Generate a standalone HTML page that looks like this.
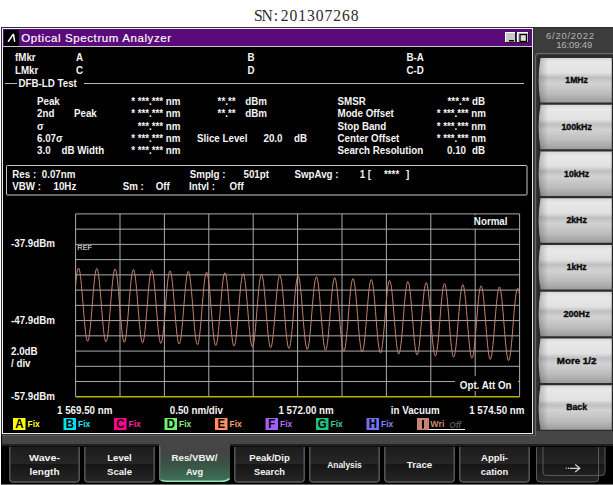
<!DOCTYPE html>
<html><head><meta charset="utf-8"><style>
html,body{margin:0;padding:0;width:613px;height:485px;overflow:hidden;background:#fff}
svg{display:block}
text{font-family:"Liberation Sans",sans-serif}
</style></head><body>
<svg width="613" height="485" viewBox="0 0 613 485">
<defs>
<linearGradient id="bf" x1="0" y1="0" x2="0" y2="1">
<stop offset="0" stop-color="#d8d8d8"/><stop offset="0.1" stop-color="#e8e8e8"/><stop offset="0.33" stop-color="#e2e2e2"/><stop offset="0.44" stop-color="#c0c0c0"/>
<stop offset="0.57" stop-color="#d2d2d2"/><stop offset="0.8" stop-color="#bcbcbc"/><stop offset="1" stop-color="#9c9c9c"/>
</linearGradient>
<linearGradient id="ls" x1="0" y1="0" x2="1" y2="0">
<stop offset="0" stop-color="#000" stop-opacity="0.22"/><stop offset="1" stop-color="#000" stop-opacity="0"/>
</linearGradient>
<linearGradient id="ub" x1="0" y1="0" x2="0" y2="1">
<stop offset="0" stop-color="#1c1c1c"/><stop offset="0.48" stop-color="#262626"/><stop offset="0.5" stop-color="#161616"/><stop offset="1" stop-color="#262626"/>
</linearGradient>
<linearGradient id="sel" x1="0" y1="0" x2="0" y2="1">
<stop offset="0" stop-color="#464646"/><stop offset="0.3" stop-color="#444444"/><stop offset="0.6" stop-color="#3a5446"/><stop offset="1" stop-color="#3e7458"/>
</linearGradient>
</defs>
<rect x="0" y="0" width="613" height="485" fill="#ffffff"/>
<text transform="translate(258.30 21) scale(0.93 1)" style="font-family:'Liberation Serif',serif" font-size="16.8" fill="#2a2a2a" text-anchor="middle">S</text>
<text transform="translate(267.05 21) scale(0.93 1)" style="font-family:'Liberation Serif',serif" font-size="16.8" fill="#2a2a2a" text-anchor="middle">N</text>
<text transform="translate(275.80 21) scale(0.93 1)" style="font-family:'Liberation Serif',serif" font-size="16.8" fill="#2a2a2a" text-anchor="middle">:</text>
<text transform="translate(284.55 21) scale(0.93 1)" style="font-family:'Liberation Serif',serif" font-size="16.8" fill="#2a2a2a" text-anchor="middle">2</text>
<text transform="translate(293.30 21) scale(0.93 1)" style="font-family:'Liberation Serif',serif" font-size="16.8" fill="#2a2a2a" text-anchor="middle">0</text>
<text transform="translate(302.05 21) scale(0.93 1)" style="font-family:'Liberation Serif',serif" font-size="16.8" fill="#2a2a2a" text-anchor="middle">1</text>
<text transform="translate(310.80 21) scale(0.93 1)" style="font-family:'Liberation Serif',serif" font-size="16.8" fill="#2a2a2a" text-anchor="middle">3</text>
<text transform="translate(319.55 21) scale(0.93 1)" style="font-family:'Liberation Serif',serif" font-size="16.8" fill="#2a2a2a" text-anchor="middle">0</text>
<text transform="translate(328.30 21) scale(0.93 1)" style="font-family:'Liberation Serif',serif" font-size="16.8" fill="#2a2a2a" text-anchor="middle">7</text>
<text transform="translate(337.05 21) scale(0.93 1)" style="font-family:'Liberation Serif',serif" font-size="16.8" fill="#2a2a2a" text-anchor="middle">2</text>
<text transform="translate(345.80 21) scale(0.93 1)" style="font-family:'Liberation Serif',serif" font-size="16.8" fill="#2a2a2a" text-anchor="middle">6</text>
<text transform="translate(354.55 21) scale(0.93 1)" style="font-family:'Liberation Serif',serif" font-size="16.8" fill="#2a2a2a" text-anchor="middle">8</text>
<rect x="1" y="27" width="612" height="458" fill="#3c3c3c"/>
<rect x="1" y="27" width="612" height="1" fill="#2e2e2e"/>
<rect x="1" y="27" width="533" height="408" fill="#303030"/>
<rect x="2" y="28" width="531" height="406" fill="#ececec"/>
<rect x="3" y="29" width="529" height="404" fill="#000"/>
<rect x="3" y="29" width="529" height="17" fill="#5a0a7a"/>
<rect x="3" y="46" width="529" height="1" fill="#c8c8c8"/>
<rect x="4" y="30" width="15" height="16" fill="#000"/>
<path d="M8.4 41.2 L13 34.6 M13.5 34.6 L14.6 41.2" stroke="#fff" stroke-width="1.5" fill="none" stroke-linecap="round"/>
<text x="21.2" y="41.8" font-size="11.5" font-weight="normal" fill="#fff" text-anchor="start" letter-spacing="0.6" stroke="#fff" stroke-width="0.15">Optical Spectrum Analyzer</text>
<rect x="505" y="32" width="11" height="11" fill="#1e1e1e"/>
<rect x="505" y="32" width="10" height="10" fill="#fff"/>
<rect x="506" y="33" width="9" height="9" fill="#c8c8c8"/>
<rect x="509" y="40" width="5" height="1.5" fill="#000"/>
<rect x="517" y="32" width="12" height="11" fill="#1e1e1e"/>
<rect x="517" y="32" width="11" height="10" fill="#fff"/>
<rect x="518" y="33" width="10" height="9" fill="#c8c8c8"/>
<rect x="520" y="34.5" width="6.5" height="7" fill="none" stroke="#000" stroke-width="1.2"/>
<rect x="521.5" y="36" width="3.5" height="4" fill="#e0e0e0"/>
<text transform="translate(15 61.3) scale(0.905 1)" font-size="10.8" font-weight="bold" fill="#f4f4f4" text-anchor="start" >fMkr</text>
<text transform="translate(15 73.5) scale(0.905 1)" font-size="10.8" font-weight="bold" fill="#f4f4f4" text-anchor="start" >LMkr</text>
<text transform="translate(76 61.3) scale(0.905 1)" font-size="10.8" font-weight="bold" fill="#f4f4f4" text-anchor="start" >A</text>
<text transform="translate(76 73.5) scale(0.905 1)" font-size="10.8" font-weight="bold" fill="#f4f4f4" text-anchor="start" >C</text>
<text transform="translate(247.5 61.3) scale(0.905 1)" font-size="10.8" font-weight="bold" fill="#f4f4f4" text-anchor="start" >B</text>
<text transform="translate(247.5 73.5) scale(0.905 1)" font-size="10.8" font-weight="bold" fill="#f4f4f4" text-anchor="start" >D</text>
<text transform="translate(406.5 61.3) scale(0.905 1)" font-size="10.8" font-weight="bold" fill="#f4f4f4" text-anchor="start" >B-A</text>
<text transform="translate(406.5 73.5) scale(0.905 1)" font-size="10.8" font-weight="bold" fill="#f4f4f4" text-anchor="start" >C-D</text>
<rect x="5" y="83" width="12" height="1" fill="#b8b8b8"/>
<rect x="84" y="83" width="440" height="1" fill="#b8b8b8"/>
<text transform="translate(18.5 86.5) scale(0.905 1)" font-size="10.8" font-weight="bold" fill="#f4f4f4" text-anchor="start" >DFB-LD Test</text>
<text transform="translate(37 105.2) scale(0.905 1)" font-size="10.8" font-weight="bold" fill="#f4f4f4" text-anchor="start" >Peak</text>
<text transform="translate(37 117.4) scale(0.905 1)" font-size="10.8" font-weight="bold" fill="#f4f4f4" text-anchor="start" >2nd</text>
<text transform="translate(74 117.4) scale(0.905 1)" font-size="10.8" font-weight="bold" fill="#f4f4f4" text-anchor="start" >Peak</text>
<text transform="translate(37 129.6) scale(0.905 1)" font-size="10.8" font-weight="bold" fill="#f4f4f4" text-anchor="start" >σ</text>
<text transform="translate(37 141.8) scale(0.905 1)" font-size="10.8" font-weight="bold" fill="#f4f4f4" text-anchor="start" >6.07σ</text>
<text transform="translate(37 154.0) scale(0.905 1)" font-size="10.8" font-weight="bold" fill="#f4f4f4" text-anchor="start" >3.0</text>
<text transform="translate(61.5 154.0) scale(0.905 1)" font-size="10.8" font-weight="bold" fill="#f4f4f4" text-anchor="start" >dB Width</text>
<text transform="translate(180.5 105.2) scale(0.905 1)" font-size="10.8" font-weight="bold" fill="#f4f4f4" text-anchor="end" >* ***.*** nm</text>
<text transform="translate(180.5 117.4) scale(0.905 1)" font-size="10.8" font-weight="bold" fill="#f4f4f4" text-anchor="end" >* ***.*** nm</text>
<text transform="translate(180.5 141.8) scale(0.905 1)" font-size="10.8" font-weight="bold" fill="#f4f4f4" text-anchor="end" >* ***.*** nm</text>
<text transform="translate(180.5 154.0) scale(0.905 1)" font-size="10.8" font-weight="bold" fill="#f4f4f4" text-anchor="end" >* ***.*** nm</text>
<text transform="translate(180.5 129.6) scale(0.905 1)" font-size="10.8" font-weight="bold" fill="#f4f4f4" text-anchor="end" >***.*** nm</text>
<text transform="translate(235.5 105.2) scale(0.905 1)" font-size="10.8" font-weight="bold" fill="#f4f4f4" text-anchor="end" >**.**</text>
<text transform="translate(245.3 105.2) scale(0.905 1)" font-size="10.8" font-weight="bold" fill="#f4f4f4" text-anchor="start" >dBm</text>
<text transform="translate(235.5 117.4) scale(0.905 1)" font-size="10.8" font-weight="bold" fill="#f4f4f4" text-anchor="end" >**.**</text>
<text transform="translate(245.3 117.4) scale(0.905 1)" font-size="10.8" font-weight="bold" fill="#f4f4f4" text-anchor="start" >dBm</text>
<text transform="translate(197 141.8) scale(0.905 1)" font-size="10.8" font-weight="bold" fill="#f4f4f4" text-anchor="start" >Slice Level</text>
<text transform="translate(263.5 141.8) scale(0.905 1)" font-size="10.8" font-weight="bold" fill="#f4f4f4" text-anchor="start" >20.0</text>
<text transform="translate(294 141.8) scale(0.905 1)" font-size="10.8" font-weight="bold" fill="#f4f4f4" text-anchor="start" >dB</text>
<text transform="translate(337.5 105.2) scale(0.905 1)" font-size="10.8" font-weight="bold" fill="#f4f4f4" text-anchor="start" >SMSR</text>
<text transform="translate(337.5 117.4) scale(0.905 1)" font-size="10.8" font-weight="bold" fill="#f4f4f4" text-anchor="start" >Mode Offset</text>
<text transform="translate(337.5 129.6) scale(0.905 1)" font-size="10.8" font-weight="bold" fill="#f4f4f4" text-anchor="start" >Stop Band</text>
<text transform="translate(337.5 141.8) scale(0.905 1)" font-size="10.8" font-weight="bold" fill="#f4f4f4" text-anchor="start" >Center Offset</text>
<text transform="translate(337.5 154.0) scale(0.905 1)" font-size="10.8" font-weight="bold" fill="#f4f4f4" text-anchor="start" >Search Resolution</text>
<text transform="translate(485 105.2) scale(0.905 1)" font-size="10.8" font-weight="bold" fill="#f4f4f4" text-anchor="end" >***.** dB</text>
<text transform="translate(486 117.4) scale(0.905 1)" font-size="10.8" font-weight="bold" fill="#f4f4f4" text-anchor="end" >* ***.*** nm</text>
<text transform="translate(486 129.6) scale(0.905 1)" font-size="10.8" font-weight="bold" fill="#f4f4f4" text-anchor="end" >* ***.*** nm</text>
<text transform="translate(486 141.8) scale(0.905 1)" font-size="10.8" font-weight="bold" fill="#f4f4f4" text-anchor="end" >* ***.*** nm</text>
<text transform="translate(447 154.0) scale(0.905 1)" font-size="10.8" font-weight="bold" fill="#f4f4f4" text-anchor="start" >0.10</text>
<text transform="translate(472 154.0) scale(0.905 1)" font-size="10.8" font-weight="bold" fill="#f4f4f4" text-anchor="start" >dB</text>
<rect x="6.5" y="165.5" width="520.5" height="29.5" rx="0.8" fill="none" stroke="#c8c8c8" stroke-width="1"/>
<text transform="translate(12.3 178.0) scale(0.905 1)" font-size="10.8" font-weight="bold" fill="#f4f4f4" text-anchor="start" >Res :</text>
<text transform="translate(41.8 178.0) scale(0.905 1)" font-size="10.8" font-weight="bold" fill="#f4f4f4" text-anchor="start" >0.07nm</text>
<text transform="translate(12.3 189.8) scale(0.905 1)" font-size="10.8" font-weight="bold" fill="#f4f4f4" text-anchor="start" >VBW :</text>
<text transform="translate(53.5 189.8) scale(0.905 1)" font-size="10.8" font-weight="bold" fill="#f4f4f4" text-anchor="start" >10Hz</text>
<text transform="translate(122.7 189.8) scale(0.905 1)" font-size="10.8" font-weight="bold" fill="#f4f4f4" text-anchor="start" >Sm :</text>
<text transform="translate(155.7 189.8) scale(0.905 1)" font-size="10.8" font-weight="bold" fill="#f4f4f4" text-anchor="start" >Off</text>
<text transform="translate(189.7 178.0) scale(0.905 1)" font-size="10.8" font-weight="bold" fill="#f4f4f4" text-anchor="start" >Smplg :</text>
<text transform="translate(243.5 178.0) scale(0.905 1)" font-size="10.8" font-weight="bold" fill="#f4f4f4" text-anchor="start" >501pt</text>
<text transform="translate(189 189.8) scale(0.905 1)" font-size="10.8" font-weight="bold" fill="#f4f4f4" text-anchor="start" >Intvl :</text>
<text transform="translate(229.6 189.8) scale(0.905 1)" font-size="10.8" font-weight="bold" fill="#f4f4f4" text-anchor="start" >Off</text>
<text transform="translate(294.4 178.0) scale(0.905 1)" font-size="10.8" font-weight="bold" fill="#f4f4f4" text-anchor="start" >SwpAvg :</text>
<text transform="translate(359.7 178.0) scale(0.905 1)" font-size="10.8" font-weight="bold" fill="#f4f4f4" text-anchor="start" >1 [</text>
<text transform="translate(384 178.0) scale(0.905 1)" font-size="10.8" font-weight="bold" fill="#f4f4f4" text-anchor="start" >****</text>
<text transform="translate(406 178.0) scale(0.905 1)" font-size="10.8" font-weight="bold" fill="#f4f4f4" text-anchor="start" >]</text>
<line x1="75.60" y1="213.9" x2="75.60" y2="396.8" stroke="#acacac" stroke-width="1"/>
<line x1="120.00" y1="213.9" x2="120.00" y2="396.8" stroke="#acacac" stroke-width="1"/>
<line x1="164.40" y1="213.9" x2="164.40" y2="396.8" stroke="#acacac" stroke-width="1"/>
<line x1="208.80" y1="213.9" x2="208.80" y2="396.8" stroke="#acacac" stroke-width="1"/>
<line x1="253.20" y1="213.9" x2="253.20" y2="396.8" stroke="#acacac" stroke-width="1"/>
<line x1="297.60" y1="213.9" x2="297.60" y2="396.8" stroke="#acacac" stroke-width="1"/>
<line x1="342.00" y1="213.9" x2="342.00" y2="396.8" stroke="#acacac" stroke-width="1"/>
<line x1="386.40" y1="213.9" x2="386.40" y2="396.8" stroke="#acacac" stroke-width="1"/>
<line x1="430.80" y1="213.9" x2="430.80" y2="396.8" stroke="#acacac" stroke-width="1"/>
<line x1="475.20" y1="213.9" x2="475.20" y2="396.8" stroke="#acacac" stroke-width="1"/>
<line x1="519.60" y1="213.9" x2="519.60" y2="396.8" stroke="#acacac" stroke-width="1"/>
<line x1="75.6" y1="213.90" x2="519.6" y2="213.90" stroke="#acacac" stroke-width="1"/>
<line x1="75.6" y1="229.14" x2="519.6" y2="229.14" stroke="#acacac" stroke-width="1"/>
<line x1="75.6" y1="244.38" x2="519.6" y2="244.38" stroke="#acacac" stroke-width="1"/>
<line x1="75.6" y1="259.62" x2="519.6" y2="259.62" stroke="#acacac" stroke-width="1"/>
<line x1="75.6" y1="274.87" x2="519.6" y2="274.87" stroke="#acacac" stroke-width="1"/>
<line x1="75.6" y1="290.11" x2="519.6" y2="290.11" stroke="#acacac" stroke-width="1"/>
<line x1="75.6" y1="305.35" x2="519.6" y2="305.35" stroke="#acacac" stroke-width="1"/>
<line x1="75.6" y1="320.59" x2="519.6" y2="320.59" stroke="#acacac" stroke-width="1"/>
<line x1="75.6" y1="335.83" x2="519.6" y2="335.83" stroke="#acacac" stroke-width="1"/>
<line x1="75.6" y1="351.08" x2="519.6" y2="351.08" stroke="#acacac" stroke-width="1"/>
<line x1="75.6" y1="366.32" x2="519.6" y2="366.32" stroke="#acacac" stroke-width="1"/>
<line x1="75.6" y1="381.56" x2="519.6" y2="381.56" stroke="#acacac" stroke-width="1"/>
<line x1="75.6" y1="396.8" x2="519.6" y2="396.8" stroke="#bcb000" stroke-width="1.6"/>
<polyline points="75.50,285.65 76.00,280.59 76.50,276.23 77.00,272.71 77.50,270.12 78.00,268.54 78.50,268.01 79.00,268.56 79.50,270.17 80.00,272.79 80.50,276.34 81.00,280.72 81.50,285.80 82.00,291.44 82.50,297.46 83.00,303.69 83.50,309.95 84.00,316.06 84.50,321.83 85.00,327.09 85.50,331.70 86.00,335.51 86.50,338.42 87.00,340.33 87.50,341.20 88.00,341.00 88.50,339.74 89.00,337.44 89.50,334.19 90.00,330.07 90.50,325.21 91.00,319.75 91.50,313.85 92.00,307.69 92.50,301.45 93.00,295.30 93.50,289.44 94.00,284.04 94.50,279.24 95.00,275.21 95.50,272.05 96.00,269.85 96.50,268.69 97.00,268.60 97.50,269.57 98.00,271.59 98.50,274.60 99.00,278.49 99.50,283.17 100.00,288.50 100.50,294.31 101.00,300.44 101.50,306.70 102.00,312.92 102.50,318.92 103.00,324.50 103.50,329.52 104.00,333.83 104.50,337.29 105.00,339.81 105.50,341.32 106.00,341.76 106.50,341.13 107.00,339.45 107.50,336.76 108.00,333.15 108.50,328.72 109.00,323.60 109.50,317.95 110.00,311.92 110.50,305.71 111.00,299.48 111.50,293.43 112.00,287.73 112.50,282.56 113.00,278.05 113.50,274.35 114.00,271.57 114.50,269.78 115.00,269.05 115.50,269.38 116.00,270.78 116.50,273.21 117.00,276.58 117.50,280.81 118.00,285.76 118.50,291.30 119.00,297.26 119.50,303.47 120.00,309.74 120.50,315.89 121.00,321.74 121.50,327.12 122.00,331.87 122.50,335.86 123.00,338.95 123.50,341.08 124.00,342.16 124.50,342.17 125.00,341.12 125.50,339.03 126.00,335.96 126.50,332.01 127.00,327.29 127.50,321.94 128.00,316.12 128.50,310.00 129.00,303.75 129.50,297.58 130.00,291.65 130.50,286.14 131.00,281.21 131.50,277.02 132.00,273.67 132.50,271.28 133.00,269.91 133.50,269.61 134.00,270.37 134.50,272.19 135.00,275.00 135.50,278.73 136.00,283.27 136.50,288.47 137.00,294.20 137.50,300.28 138.00,306.54 138.50,312.78 139.00,318.84 139.50,324.52 140.00,329.67 140.50,334.13 141.00,337.77 141.50,340.49 142.00,342.20 142.50,342.86 143.00,342.45 143.50,340.98 144.00,338.49 144.50,335.05 145.00,330.78 145.50,325.79 146.00,320.23 146.50,314.27 147.00,308.08 147.50,301.84 148.00,295.74 148.50,289.96 149.00,284.67 149.50,280.02 150.00,276.15 150.50,273.18 151.00,271.19 151.50,270.24 152.00,270.37 152.50,271.56 153.00,273.78 153.50,276.98 154.00,281.04 154.50,285.86 155.00,291.30 155.50,297.19 156.00,303.36 156.50,309.64 157.00,315.83 157.50,321.76 158.00,327.25 158.50,332.14 159.00,336.29 159.50,339.57 160.00,341.90 160.50,343.19 161.00,343.42 161.50,342.58 162.00,340.70 162.50,337.82 163.00,334.04 163.50,329.46 164.00,324.23 164.50,318.49 165.00,312.41 165.50,306.18 166.00,299.98 166.50,293.99 167.00,288.39 167.50,283.33 168.00,278.98 168.50,275.46 169.00,272.87 169.50,271.30 170.00,270.78 170.50,271.33 171.00,272.94 171.50,275.56 172.00,279.12 172.50,283.50 173.00,288.59 173.50,294.23 174.00,300.26 174.50,306.49 175.00,312.76 175.50,318.87 176.00,324.64 176.50,329.91 177.00,334.52 177.50,338.34 178.00,341.25 178.50,343.17 179.00,344.04 179.50,343.84 180.00,342.58 180.50,340.29 181.00,337.04 181.50,332.93 182.00,328.07 182.50,322.62 183.00,316.72 183.50,310.57 184.00,304.33 184.50,298.19 185.00,292.33 185.50,286.93 186.00,282.14 186.50,278.11 187.00,274.95 187.50,272.76 188.00,271.60 188.50,271.51 189.00,272.50 189.50,274.52 190.00,277.53 190.50,281.43 191.00,286.11 191.50,291.44 192.00,297.25 192.50,303.39 193.00,309.66 193.50,315.88 194.00,321.88 194.50,327.47 195.00,332.49 195.50,336.80 196.00,340.27 196.50,342.79 197.00,344.30 197.50,344.75 198.00,344.13 198.50,342.45 199.00,339.76 199.50,336.16 200.00,331.73 200.50,326.62 201.00,320.97 201.50,314.95 202.00,308.74 202.50,302.51 203.00,296.47 203.50,290.77 204.00,285.60 204.50,281.10 205.00,277.40 205.50,274.63 206.00,272.84 206.50,272.11 207.00,272.45 207.50,273.86 208.00,276.28 208.50,279.66 209.00,283.89 209.50,288.85 210.00,294.39 210.50,300.36 211.00,306.57 211.50,312.84 212.00,319.00 212.50,324.86 213.00,330.24 213.50,335.00 214.00,338.98 214.50,342.08 215.00,344.21 215.50,345.30 216.00,345.32 216.50,344.27 217.00,342.18 217.50,339.12 218.00,335.17 218.50,330.45 219.00,325.11 219.50,319.29 220.00,313.17 220.50,306.93 221.00,300.76 221.50,294.84 222.00,289.33 222.50,284.41 223.00,280.22 223.50,276.88 224.00,274.49 224.50,273.13 225.00,272.82 225.50,273.59 226.00,275.41 226.50,278.23 227.00,281.96 227.50,286.50 228.00,291.72 228.50,297.45 229.00,303.53 229.50,309.79 230.00,316.04 230.50,322.10 231.00,327.79 231.50,332.94 232.00,337.40 232.50,341.05 233.00,343.77 233.50,345.49 234.00,346.15 234.50,345.74 235.00,344.27 235.50,341.79 236.00,338.36 236.50,334.09 237.00,329.10 237.50,323.55 238.00,317.59 238.50,311.41 239.00,305.17 239.50,299.08 240.00,293.30 240.50,288.01 241.00,283.37 241.50,279.51 242.00,276.54 242.50,274.55 243.00,273.61 243.50,273.74 244.00,274.93 244.50,277.16 245.00,280.36 245.50,284.43 246.00,289.25 246.50,294.69 247.00,300.59 247.50,306.77 248.00,313.05 248.50,319.24 249.00,325.17 249.50,330.67 250.00,335.56 250.50,339.71 251.00,343.00 251.50,345.33 252.00,346.63 252.50,346.87 253.00,346.03 253.50,344.15 254.00,341.28 254.50,337.50 255.00,332.93 255.50,327.70 256.00,321.96 256.50,315.89 257.00,309.66 257.50,303.47 258.00,297.48 258.50,291.88 259.00,286.83 259.50,282.48 260.00,278.97 260.50,276.38 261.00,274.81 261.50,274.30 262.00,274.85 262.50,276.47 263.00,279.09 263.50,282.65 264.00,287.04 264.50,292.13 265.00,297.78 265.50,303.81 266.00,310.05 266.50,316.32 267.00,322.43 267.50,328.21 268.00,333.48 268.50,338.09 269.00,341.91 269.50,344.83 270.00,346.75 270.50,347.63 271.00,347.44 271.50,346.18 272.00,343.90 272.50,340.65 273.00,336.54 273.50,331.69 274.00,326.24 274.50,320.35 275.00,314.19 275.50,307.96 276.00,301.82 276.50,295.97 277.00,290.57 277.50,285.79 278.00,281.76 278.50,278.61 279.00,276.42 279.50,275.27 280.00,275.18 280.50,276.17 281.00,278.20 281.50,281.21 282.00,285.11 282.50,289.80 283.00,295.13 283.50,300.95 284.00,307.09 284.50,313.36 285.00,319.59 285.50,325.59 286.00,331.19 286.50,336.22 287.00,340.53 287.50,344.00 288.00,346.53 288.50,348.04 289.00,348.49 289.50,347.87 290.00,346.20 290.50,343.52 291.00,339.92 291.50,335.49 292.00,330.38 292.50,324.74 293.00,318.72 293.50,312.52 294.00,306.30 294.50,300.26 295.00,294.57 295.50,289.40 296.00,284.90 296.50,281.21 297.00,278.43 297.50,276.66 298.00,275.93 298.50,276.27 299.00,277.68 299.50,280.11 300.00,283.50 300.50,287.73 301.00,292.69 301.50,298.24 302.00,304.21 302.50,310.42 303.00,316.70 303.50,322.86 304.00,328.72 304.50,334.11 305.00,338.87 305.50,342.86 306.00,345.97 306.50,348.10 307.00,349.19 307.50,349.21 308.00,348.17 308.50,346.08 309.00,343.03 309.50,339.08 310.00,334.37 310.50,329.03 311.00,323.21 311.50,317.10 312.00,310.87 312.50,304.70 313.00,298.78 313.50,293.28 314.00,288.36 314.50,284.17 315.00,280.84 315.50,278.45 316.00,277.09 316.50,276.79 317.00,277.57 317.50,279.39 318.00,282.21 318.50,285.95 319.00,290.49 319.50,295.71 320.00,301.45 320.50,307.54 321.00,313.80 321.50,320.05 322.00,326.12 322.50,331.81 323.00,336.96 323.50,341.43 324.00,345.08 324.50,347.81 325.00,349.53 325.50,350.20 326.00,349.79 326.50,348.33 327.00,345.84 327.50,342.42 328.00,338.15 328.50,333.17 329.00,327.62 329.50,321.67 330.00,315.49 330.50,309.26 331.00,303.17 331.50,297.40 332.00,292.11 332.50,287.47 333.00,283.61 333.50,280.65 334.00,278.67 334.50,277.73 335.00,277.86 335.50,279.06 336.00,281.29 336.50,284.49 337.00,288.57 337.50,293.40 338.00,298.84 338.50,304.74 339.00,310.92 339.50,317.20 340.00,323.40 340.50,329.34 341.00,334.84 341.50,339.74 342.00,343.89 342.50,347.19 343.00,349.52 343.50,350.82 344.00,351.06 344.50,350.23 345.00,348.35 345.50,345.48 346.00,341.71 346.50,337.14 347.00,331.92 347.50,326.19 348.00,320.12 348.50,313.90 349.00,307.70 349.50,301.72 350.00,296.12 350.50,291.08 351.00,286.74 351.50,283.22 352.00,280.64 352.50,279.08 353.00,278.57 353.50,279.13 354.00,280.75 354.50,283.38 355.00,286.94 355.50,291.33 356.00,296.43 356.50,302.08 357.00,308.11 357.50,314.35 358.00,320.63 358.50,326.74 359.00,332.53 359.50,337.80 360.00,342.42 360.50,346.25 361.00,349.17 361.50,351.09 362.00,351.98 362.50,351.79 363.00,350.53 363.50,348.25 364.00,345.01 364.50,340.90 365.00,336.06 365.50,330.61 366.00,324.72 366.50,318.58 367.00,312.34 367.50,306.21 368.00,300.36 368.50,294.97 369.00,290.19 369.50,286.17 370.00,283.02 370.50,280.84 371.00,279.69 371.50,279.61 372.00,280.60 372.50,282.63 373.00,285.64 373.50,289.55 374.00,294.24 374.50,299.58 375.00,305.40 375.50,311.54 376.00,317.82 376.50,324.06 377.00,330.06 377.50,335.66 378.00,340.69 378.50,345.01 379.00,348.49 379.50,351.02 380.00,352.53 380.50,352.99 381.00,352.37 381.50,350.70 382.00,348.03 382.50,344.43 383.00,340.01 383.50,334.91 384.00,329.26 384.50,323.25 385.00,317.05 385.50,310.84 386.00,304.80 386.50,299.11 387.00,293.95 387.50,289.45 388.00,285.77 388.50,283.00 389.00,281.22 389.50,280.50 390.00,280.85 390.50,282.26 391.00,284.70 391.50,288.08 392.00,292.32 392.50,297.29 393.00,302.84 393.50,308.81 394.00,315.03 394.50,321.31 395.00,327.48 395.50,333.34 396.00,338.74 396.50,343.50 397.00,347.49 397.50,350.60 398.00,352.74 398.50,353.83 399.00,353.86 399.50,352.82 400.00,350.74 400.50,347.69 401.00,343.75 401.50,339.04 402.00,333.70 402.50,327.89 403.00,321.78 403.50,315.55 404.00,309.39 404.50,303.47 405.00,297.97 405.50,293.06 406.00,288.88 406.50,285.55 407.00,283.17 407.50,281.81 408.00,281.52 408.50,282.29 409.00,284.12 409.50,286.95 410.00,290.69 410.50,295.24 411.00,300.46 411.50,306.20 412.00,312.29 412.50,318.56 413.00,324.82 413.50,330.88 414.00,336.58 414.50,341.74 415.00,346.21 415.50,349.87 416.00,352.60 416.50,354.32 417.00,354.99 417.50,354.59 418.00,353.13 418.50,350.65 419.00,347.23 419.50,342.97 420.00,337.99 420.50,332.45 421.00,326.50 421.50,320.32 422.00,314.10 422.50,308.01 423.00,302.24 423.50,296.96 424.00,292.32 424.50,288.47 425.00,285.51 425.50,283.53 426.00,282.60 426.50,282.73 427.00,283.94 427.50,286.17 428.00,289.38 428.50,293.46 429.00,298.29 429.50,303.74 430.00,309.64 430.50,315.83 431.00,322.12 431.50,328.32 432.00,334.26 432.50,339.76 433.00,344.66 433.50,348.82 434.00,352.12 434.50,354.46 435.00,355.77 435.50,356.01 436.00,355.18 436.50,353.31 437.00,350.45 437.50,346.68 438.00,342.11 438.50,336.89 439.00,331.16 439.50,325.10 440.00,318.88 440.50,312.69 441.00,306.71 441.50,301.12 442.00,296.08 442.50,291.74 443.00,288.23 443.50,285.66 444.00,284.09 444.50,283.59 445.00,284.15 445.50,285.78 446.00,288.41 446.50,291.98 447.00,296.38 447.50,301.47 448.00,307.13 448.50,313.16 449.00,319.41 449.50,325.69 450.00,331.81 450.50,337.60 451.00,342.88 451.50,347.50 452.00,351.33 452.50,354.25 453.00,356.19 453.50,357.07 454.00,356.89 454.50,355.64 455.00,353.36 455.50,350.12 456.00,346.02 456.50,341.18 457.00,335.74 457.50,329.85 458.00,323.71 458.50,317.48 459.00,311.35 459.50,305.51 460.00,300.12 460.50,295.34 461.00,291.32 461.50,288.18 462.00,286.00 462.50,284.86 463.00,284.78 463.50,285.77 464.00,287.81 464.50,290.83 465.00,294.74 465.50,299.44 466.00,304.78 466.50,310.61 467.00,316.75 467.50,323.03 468.00,329.27 468.50,335.28 469.00,340.88 469.50,345.92 470.00,350.24 470.50,353.72 471.00,356.26 471.50,357.78 472.00,358.24 472.50,357.63 473.00,355.96 473.50,353.29 474.00,349.69 474.50,345.28 475.00,340.18 475.50,334.54 476.00,328.53 476.50,322.33 477.00,316.13 477.50,310.09 478.00,304.41 478.50,299.25 479.00,294.76 479.50,291.08 480.00,288.31 480.50,286.54 481.00,285.82 481.50,286.18 482.00,287.59 482.50,290.03 483.00,293.42 483.50,297.66 484.00,302.64 484.50,308.19 485.00,314.17 485.50,320.39 486.00,326.68 486.50,332.85 487.00,338.71 487.50,344.11 488.00,348.88 488.50,352.88 489.00,355.99 489.50,358.13 490.00,359.23 490.50,359.26 491.00,358.22 491.50,356.15 492.00,353.10 492.50,349.16 493.00,344.46 493.50,339.12 494.00,333.32 494.50,327.21 495.00,320.99 495.50,314.83 496.00,308.92 496.50,303.42 497.00,298.52 497.50,294.34 498.00,291.01 498.50,288.63 499.00,287.28 499.50,286.99 500.00,287.77 500.50,289.60 501.00,292.43 501.50,296.18 502.00,300.73 502.50,305.96 503.00,311.70 503.50,317.80 504.00,324.07 504.50,330.33 505.00,336.40 505.50,342.10 506.00,347.27 506.50,351.74 507.00,355.40 507.50,358.14 508.00,359.87 508.50,360.54 509.00,360.15 509.50,358.69 510.00,356.21 510.50,352.80 511.00,348.54 511.50,343.57 512.00,338.03 512.50,332.08 513.00,325.91 513.50,319.69 514.00,313.60 514.50,307.84 515.00,302.56 515.50,297.93 516.00,294.08 516.50,291.12 517.00,289.15 517.50,288.22 518.00,288.36 518.50,289.57 519.00,291.81 519.50,295.02" fill="none" stroke="#c4826e" stroke-width="1"/>
<rect x="77" y="244.9" width="16" height="6.5" fill="#000"/>
<text x="77.3" y="250.4" font-size="7.7" font-weight="normal" fill="#f4f4f4" text-anchor="start" textLength="14.8" lengthAdjust="spacingAndGlyphs">REF</text>
<rect x="470" y="215.3" width="48" height="13" fill="#000"/>
<text transform="translate(507.5 224.8) scale(0.905 1)" font-size="10.8" font-weight="bold" fill="#f4f4f4" text-anchor="end" >Normal</text>
<rect x="455" y="376" width="63" height="15" fill="#000"/>
<text transform="translate(511.5 389) scale(0.905 1)" font-size="10.8" font-weight="bold" fill="#f4f4f4" text-anchor="end" >Opt. Att On</text>
<text transform="translate(11 247.3) scale(0.905 1)" font-size="10.8" font-weight="bold" fill="#f4f4f4" text-anchor="start" >-37.9dBm</text>
<text transform="translate(11 324) scale(0.905 1)" font-size="10.8" font-weight="bold" fill="#f4f4f4" text-anchor="start" >-47.9dBm</text>
<text transform="translate(11 354.5) scale(0.905 1)" font-size="10.8" font-weight="bold" fill="#f4f4f4" text-anchor="start" >2.0dB</text>
<text transform="translate(11 366.6) scale(0.905 1)" font-size="10.8" font-weight="bold" fill="#f4f4f4" text-anchor="start" >/ div</text>
<text transform="translate(11 400.2) scale(0.905 1)" font-size="10.8" font-weight="bold" fill="#f4f4f4" text-anchor="start" >-57.9dBm</text>
<text transform="translate(57 414) scale(0.905 1)" font-size="10.8" font-weight="bold" fill="#f4f4f4" text-anchor="start" >1 569.50 nm</text>
<text transform="translate(169.8 414) scale(0.905 1)" font-size="10.8" font-weight="bold" fill="#f4f4f4" text-anchor="start" >0.50 nm/div</text>
<text transform="translate(278.4 414) scale(0.905 1)" font-size="10.8" font-weight="bold" fill="#f4f4f4" text-anchor="start" >1 572.00 nm</text>
<text transform="translate(390.8 414) scale(0.905 1)" font-size="10.8" font-weight="bold" fill="#f4f4f4" text-anchor="start" >in Vacuum</text>
<text transform="translate(524.5 414) scale(0.905 1)" font-size="10.8" font-weight="bold" fill="#f4f4f4" text-anchor="end" >1 574.50 nm</text>
<rect x="13.0" y="418" width="12.5" height="12" fill="#ffff00"/>
<text transform="translate(19.3 427.6) scale(0.95 1)" font-size="12" font-weight="bold" fill="#000" text-anchor="middle" >A</text>
<text transform="translate(27.6 427.3) scale(0.86 1)" font-size="9.8" font-weight="bold" fill="#ffff20" text-anchor="start" >Fix</text>
<rect x="63.5" y="418" width="12.5" height="12" fill="#00e0f0"/>
<text transform="translate(69.8 427.6) scale(0.95 1)" font-size="12" font-weight="bold" fill="#000" text-anchor="middle" >B</text>
<text transform="translate(78.1 427.3) scale(0.86 1)" font-size="9.8" font-weight="bold" fill="#20e8f0" text-anchor="start" >Fix</text>
<rect x="114.0" y="418" width="12.5" height="12" fill="#ff0090"/>
<text transform="translate(120.3 427.6) scale(0.95 1)" font-size="12" font-weight="bold" fill="#000" text-anchor="middle" >C</text>
<text transform="translate(128.6 427.3) scale(0.86 1)" font-size="9.8" font-weight="bold" fill="#ff2090" text-anchor="start" >Fix</text>
<rect x="164.5" y="418" width="12.5" height="12" fill="#70f070"/>
<text transform="translate(170.8 427.6) scale(0.95 1)" font-size="12" font-weight="bold" fill="#000" text-anchor="middle" >D</text>
<text transform="translate(179.1 427.3) scale(0.86 1)" font-size="9.8" font-weight="bold" fill="#80f080" text-anchor="start" >Fix</text>
<rect x="215.0" y="418" width="12.5" height="12" fill="#ff9060"/>
<text transform="translate(221.3 427.6) scale(0.95 1)" font-size="12" font-weight="bold" fill="#000" text-anchor="middle" >E</text>
<text transform="translate(229.6 427.3) scale(0.86 1)" font-size="9.8" font-weight="bold" fill="#ff9a6a" text-anchor="start" >Fix</text>
<rect x="265.5" y="418" width="12.5" height="12" fill="#a060f0"/>
<text transform="translate(271.8 427.6) scale(0.95 1)" font-size="12" font-weight="bold" fill="#000" text-anchor="middle" >F</text>
<text transform="translate(280.1 427.3) scale(0.86 1)" font-size="9.8" font-weight="bold" fill="#b070f0" text-anchor="start" >Fix</text>
<rect x="316.0" y="418" width="12.5" height="12" fill="#20c080"/>
<text transform="translate(322.3 427.6) scale(0.95 1)" font-size="12" font-weight="bold" fill="#000" text-anchor="middle" >G</text>
<text transform="translate(330.6 427.3) scale(0.86 1)" font-size="9.8" font-weight="bold" fill="#40d090" text-anchor="start" >Fix</text>
<rect x="366.5" y="418" width="12.5" height="12" fill="#7070f0"/>
<text transform="translate(372.8 427.6) scale(0.95 1)" font-size="12" font-weight="bold" fill="#000" text-anchor="middle" >H</text>
<text transform="translate(381.1 427.3) scale(0.86 1)" font-size="9.8" font-weight="bold" fill="#8888ff" text-anchor="start" >Fix</text>
<rect x="417" y="418" width="12" height="12" fill="#c88472"/>
<rect x="422" y="420" width="2" height="8.5" fill="#000"/>
<text transform="translate(430.3 427.3) scale(0.9 1)" font-size="9.8" font-weight="bold" fill="#d08a70" text-anchor="start" >Wri</text>
<text transform="translate(449.3 427.6) scale(0.86 1)" font-size="9.6" font-weight="bold" fill="#555555" text-anchor="start" font-style="italic">Off</text>
<rect x="429" y="429" width="36" height="1" fill="#f0f0f0"/>
<rect x="534" y="28" width="79" height="418" fill="#3c3c3c"/>
<text x="570.4" y="38.6" font-size="9.5" font-weight="normal" fill="#b4b4b4" text-anchor="middle" letter-spacing="0.7">6/20/2022</text>
<text x="574.2" y="48.4" font-size="9.5" font-weight="normal" fill="#b4b4b4" text-anchor="middle" letter-spacing="-0.12">16:09:49</text>
<path d="M535 436 L535 56.5 Q535 53 538.5 53 L613 53 L613 431 L536 431 Z" fill="#2c2c2c"/>
<path d="M535.6 436 L535.6 56.5 Q535.6 53.6 538.5 53.6 L613 53.6" fill="none" stroke="#6a6a6a" stroke-width="1.2"/>
<rect x="536.2" y="431" width="77" height="5" fill="#464646"/>
<path d="M540.5 58.00 L612 58.00 L612 102.60 L540.5 102.60 Q536.8 80.30 540.5 58.00 Z" fill="url(#bf)"/>
<path d="M540.5 58.00 L548 58.00 L548 102.60 L540.5 102.60 Q536.8 80.30 540.5 58.00 Z" fill="url(#ls)"/>
<rect x="611" y="58.00" width="2" height="44.6" fill="#000" opacity="0.18"/>
<path d="M540.5 104.75 L612 104.75 L612 149.35 L540.5 149.35 Q536.8 127.05 540.5 104.75 Z" fill="url(#bf)"/>
<path d="M540.5 104.75 L548 104.75 L548 149.35 L540.5 149.35 Q536.8 127.05 540.5 104.75 Z" fill="url(#ls)"/>
<rect x="611" y="104.75" width="2" height="44.6" fill="#000" opacity="0.18"/>
<path d="M540.5 151.50 L612 151.50 L612 196.10 L540.5 196.10 Q536.8 173.80 540.5 151.50 Z" fill="url(#bf)"/>
<path d="M540.5 151.50 L548 151.50 L548 196.10 L540.5 196.10 Q536.8 173.80 540.5 151.50 Z" fill="url(#ls)"/>
<rect x="611" y="151.50" width="2" height="44.6" fill="#000" opacity="0.18"/>
<path d="M540.5 198.25 L612 198.25 L612 242.85 L540.5 242.85 Q536.8 220.55 540.5 198.25 Z" fill="url(#bf)"/>
<path d="M540.5 198.25 L548 198.25 L548 242.85 L540.5 242.85 Q536.8 220.55 540.5 198.25 Z" fill="url(#ls)"/>
<rect x="611" y="198.25" width="2" height="44.6" fill="#000" opacity="0.18"/>
<path d="M540.5 245.00 L612 245.00 L612 289.60 L540.5 289.60 Q536.8 267.30 540.5 245.00 Z" fill="url(#bf)"/>
<path d="M540.5 245.00 L548 245.00 L548 289.60 L540.5 289.60 Q536.8 267.30 540.5 245.00 Z" fill="url(#ls)"/>
<rect x="611" y="245.00" width="2" height="44.6" fill="#000" opacity="0.18"/>
<path d="M540.5 291.75 L612 291.75 L612 336.35 L540.5 336.35 Q536.8 314.05 540.5 291.75 Z" fill="url(#bf)"/>
<path d="M540.5 291.75 L548 291.75 L548 336.35 L540.5 336.35 Q536.8 314.05 540.5 291.75 Z" fill="url(#ls)"/>
<rect x="611" y="291.75" width="2" height="44.6" fill="#000" opacity="0.18"/>
<path d="M540.5 338.50 L612 338.50 L612 383.10 L540.5 383.10 Q536.8 360.80 540.5 338.50 Z" fill="url(#bf)"/>
<path d="M540.5 338.50 L548 338.50 L548 383.10 L540.5 383.10 Q536.8 360.80 540.5 338.50 Z" fill="url(#ls)"/>
<rect x="611" y="338.50" width="2" height="44.6" fill="#000" opacity="0.18"/>
<path d="M540.5 385.25 L612 385.25 L612 429.85 L540.5 429.85 Q536.8 407.55 540.5 385.25 Z" fill="url(#bf)"/>
<path d="M540.5 385.25 L548 385.25 L548 429.85 L540.5 429.85 Q536.8 407.55 540.5 385.25 Z" fill="url(#ls)"/>
<rect x="611" y="385.25" width="2" height="44.6" fill="#000" opacity="0.18"/>
<text x="576.6" y="83.1" font-size="9.3" font-weight="bold" fill="#0a0a0a" text-anchor="middle" stroke="#0a0a0a" stroke-width="0.4" textLength="22.5" lengthAdjust="spacingAndGlyphs">1MHz</text>
<text x="576.6" y="129.85" font-size="9.3" font-weight="bold" fill="#0a0a0a" text-anchor="middle" stroke="#0a0a0a" stroke-width="0.4" textLength="30.400000000000002" lengthAdjust="spacingAndGlyphs">100kHz</text>
<text x="576.6" y="176.6" font-size="9.3" font-weight="bold" fill="#0a0a0a" text-anchor="middle" stroke="#0a0a0a" stroke-width="0.4" textLength="25.1" lengthAdjust="spacingAndGlyphs">10kHz</text>
<text x="576.6" y="223.35" font-size="9.3" font-weight="bold" fill="#0a0a0a" text-anchor="middle" stroke="#0a0a0a" stroke-width="0.4" textLength="20.400000000000002" lengthAdjust="spacingAndGlyphs">2kHz</text>
<text x="576.6" y="270.1" font-size="9.3" font-weight="bold" fill="#0a0a0a" text-anchor="middle" stroke="#0a0a0a" stroke-width="0.4" textLength="19.700000000000003" lengthAdjust="spacingAndGlyphs">1kHz</text>
<text x="576.6" y="316.85" font-size="9.3" font-weight="bold" fill="#0a0a0a" text-anchor="middle" stroke="#0a0a0a" stroke-width="0.4" textLength="26.1" lengthAdjust="spacingAndGlyphs">200Hz</text>
<text x="576.6" y="363.6" font-size="9.3" font-weight="bold" fill="#0a0a0a" text-anchor="middle" stroke="#0a0a0a" stroke-width="0.4" textLength="39.6" lengthAdjust="spacingAndGlyphs">More 1/2</text>
<text x="576.6" y="410.35" font-size="9.3" font-weight="bold" fill="#0a0a0a" text-anchor="middle" stroke="#0a0a0a" stroke-width="0.4" textLength="20.8" lengthAdjust="spacingAndGlyphs">Back</text>
<rect x="1" y="435" width="612" height="50" fill="#000"/>
<rect x="2" y="435" width="611" height="9" fill="#464646"/>
<rect x="2" y="435" width="534" height="1" fill="#5c5c5c"/>
<rect x="1" y="444" width="612" height="2" fill="#202020"/>
<path d="M9 446.5 L80 446.5 L80 479 Q80 482.5 75 482.5 L14 482.5 Q9 482.5 9 479 Z" fill="url(#ub)"/>
<path d="M9.8 447 L9.8 479 Q9.8 482 14 482 L75 482 Q79.2 482 79.2 479 L79.2 447" fill="none" stroke="#585858" stroke-width="1.4"/>
<text x="44.5" y="460.5" font-size="9.3" font-weight="bold" fill="#f4f4f4" text-anchor="middle" textLength="31" lengthAdjust="spacingAndGlyphs">Wave-</text>
<text x="44.5" y="474.8" font-size="9.3" font-weight="bold" fill="#f4f4f4" text-anchor="middle" textLength="30" lengthAdjust="spacingAndGlyphs">length</text>
<path d="M84 446.5 L155 446.5 L155 479 Q155 482.5 150 482.5 L89 482.5 Q84 482.5 84 479 Z" fill="url(#ub)"/>
<path d="M84.8 447 L84.8 479 Q84.8 482 89 482 L150 482 Q154.2 482 154.2 479 L154.2 447" fill="none" stroke="#585858" stroke-width="1.4"/>
<text x="119.5" y="460.5" font-size="9.3" font-weight="bold" fill="#f4f4f4" text-anchor="middle" textLength="24.5" lengthAdjust="spacingAndGlyphs">Level</text>
<text x="119.5" y="474.8" font-size="9.3" font-weight="bold" fill="#f4f4f4" text-anchor="middle" textLength="25" lengthAdjust="spacingAndGlyphs">Scale</text>
<path d="M159 440 L230 440 L230 478 Q230 481.5 225 481.8 L164 481.8 Q159 481.5 159 478 Z" fill="url(#sel)"/>
<rect x="159" y="446" width="1.5" height="34" fill="#6a6a6a"/>
<path d="M161 480 Q163 481.2 167 481.3 L222 481.3 Q227 481 229.5 478.5" stroke="#90e8b8" stroke-width="1.4" fill="none"/>
<text x="194.5" y="460.5" font-size="9.3" font-weight="bold" fill="#f4f4f4" text-anchor="middle" textLength="46" lengthAdjust="spacingAndGlyphs">Res/VBW/</text>
<text x="194.5" y="474.8" font-size="9.3" font-weight="bold" fill="#f4f4f4" text-anchor="middle" textLength="17" lengthAdjust="spacingAndGlyphs">Avg</text>
<path d="M234 446.5 L305 446.5 L305 479 Q305 482.5 300 482.5 L239 482.5 Q234 482.5 234 479 Z" fill="url(#ub)"/>
<path d="M234.8 447 L234.8 479 Q234.8 482 239 482 L300 482 Q304.2 482 304.2 479 L304.2 447" fill="none" stroke="#585858" stroke-width="1.4"/>
<text x="269.5" y="460.5" font-size="9.3" font-weight="bold" fill="#f4f4f4" text-anchor="middle" textLength="40.5" lengthAdjust="spacingAndGlyphs">Peak/Dip</text>
<text x="269.5" y="474.8" font-size="9.3" font-weight="bold" fill="#f4f4f4" text-anchor="middle" textLength="31" lengthAdjust="spacingAndGlyphs">Search</text>
<path d="M309 446.5 L380 446.5 L380 479 Q380 482.5 375 482.5 L314 482.5 Q309 482.5 309 479 Z" fill="url(#ub)"/>
<path d="M309.8 447 L309.8 479 Q309.8 482 314 482 L375 482 Q379.2 482 379.2 479 L379.2 447" fill="none" stroke="#585858" stroke-width="1.4"/>
<text x="344.5" y="468.2" font-size="9.3" font-weight="bold" fill="#f4f4f4" text-anchor="middle" textLength="34.5" lengthAdjust="spacingAndGlyphs">Analysis</text>
<path d="M384 446.5 L455 446.5 L455 479 Q455 482.5 450 482.5 L389 482.5 Q384 482.5 384 479 Z" fill="url(#ub)"/>
<path d="M384.8 447 L384.8 479 Q384.8 482 389 482 L450 482 Q454.2 482 454.2 479 L454.2 447" fill="none" stroke="#585858" stroke-width="1.4"/>
<text x="419.5" y="468.2" font-size="9.3" font-weight="bold" fill="#f4f4f4" text-anchor="middle" textLength="25.5" lengthAdjust="spacingAndGlyphs">Trace</text>
<path d="M459 446.5 L530 446.5 L530 479 Q530 482.5 525 482.5 L464 482.5 Q459 482.5 459 479 Z" fill="url(#ub)"/>
<path d="M459.8 447 L459.8 479 Q459.8 482 464 482 L525 482 Q529.2 482 529.2 479 L529.2 447" fill="none" stroke="#585858" stroke-width="1.4"/>
<text x="494.5" y="460.5" font-size="9.3" font-weight="bold" fill="#f4f4f4" text-anchor="middle" textLength="27" lengthAdjust="spacingAndGlyphs">Appli-</text>
<text x="494.5" y="474.8" font-size="9.3" font-weight="bold" fill="#f4f4f4" text-anchor="middle" textLength="27.5" lengthAdjust="spacingAndGlyphs">cation</text>
<path d="M536.5 447 L536.5 479 Q536.5 482 540.5 482 L594.5 482 Q598.5 482 598.5 479 L598.5 475.5 L605 475.5 L605 447 Z" fill="url(#ub)"/>
<path d="M536.5 447 L536.5 479 Q536.5 482 540.5 482 L594.5 482 Q598.5 482 598.5 479 L598.5 447" fill="none" stroke="#5a5a5a" stroke-width="1"/>
<path d="M543 447 L543 472.5 Q543 475.5 547 475.5 L601 475.5 Q605 475.5 605 472.5 L605 447" fill="none" stroke="#5a5a5a" stroke-width="1"/>
<path d="M569.6 468.3 L579.5 468.3 M575.2 464.6 L579.8 468.3 L575.2 472" stroke="#d0d0d0" stroke-width="1.3" fill="none"/>
<rect x="565.7" y="467.6" width="1.2" height="1.3" fill="#c0c0c0"/><rect x="567.9" y="467.6" width="1.2" height="1.3" fill="#d0d0d0"/>
<rect x="1" y="484" width="612" height="1" fill="#707070"/>
</svg></body></html>
